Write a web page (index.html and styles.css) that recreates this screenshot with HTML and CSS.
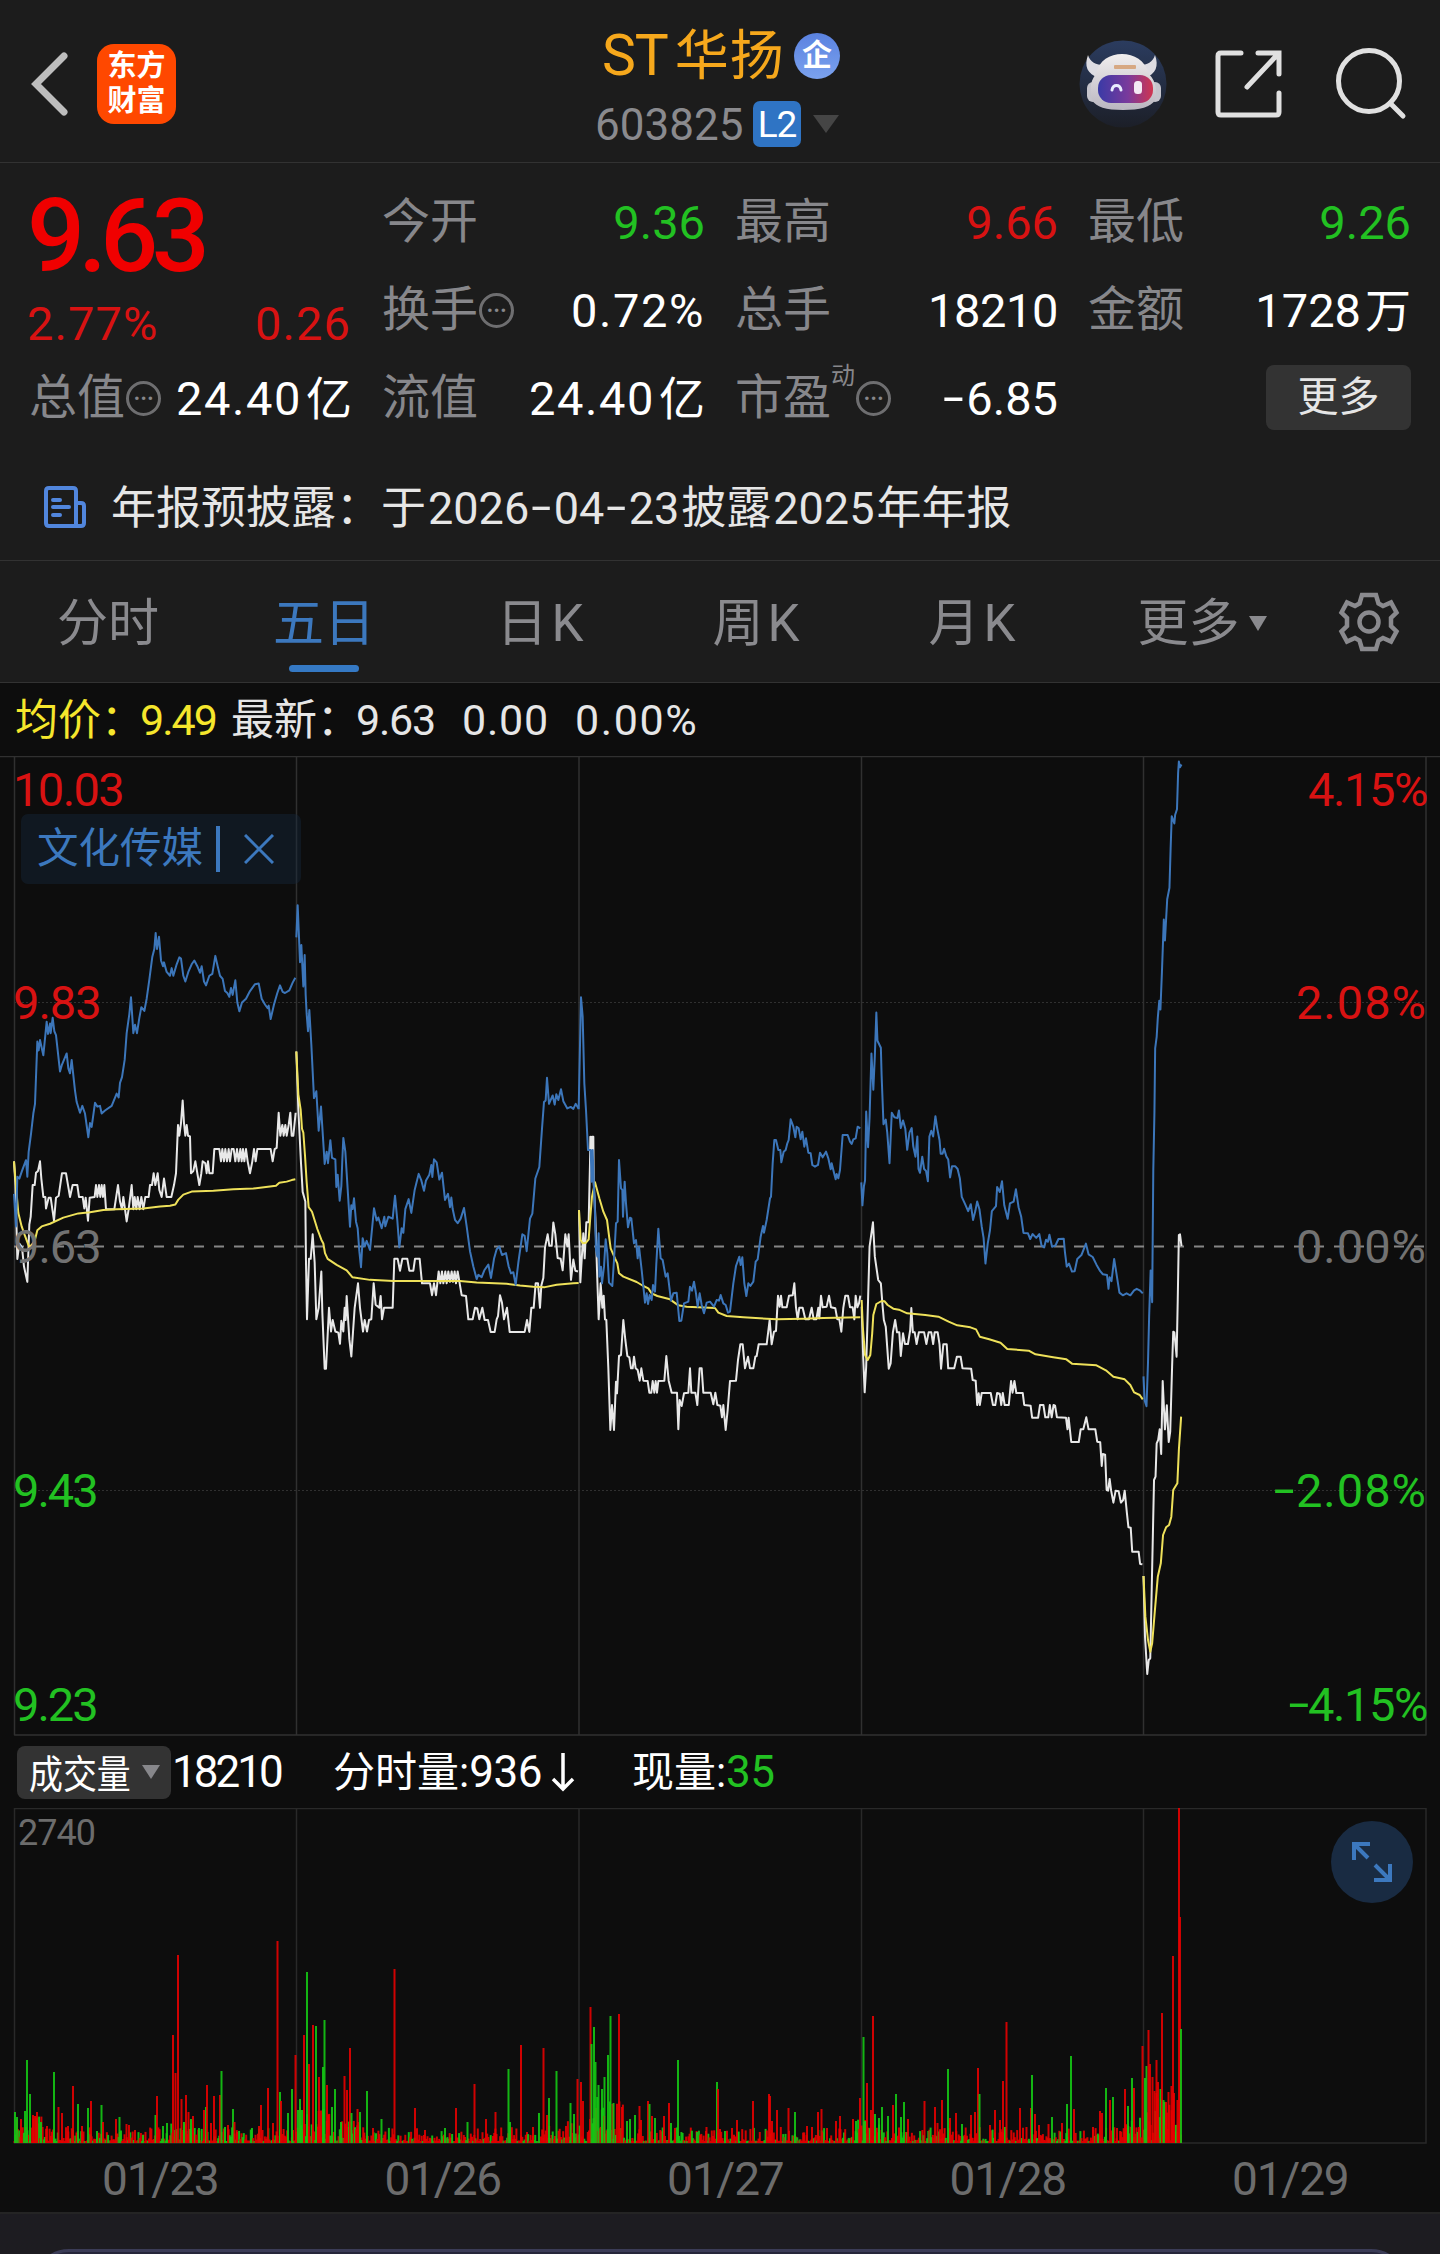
FILE: index.html
```html
<!DOCTYPE html>
<html lang="zh-CN">
<head>
    <meta charset="UTF-8">
    <meta name="viewport" content="width=device-width, initial-scale=1.0">
    <title>ST华扬 603825</title>
    <link rel="stylesheet" href="styles.css">
</head>
<body>
    <header class="header">
        <div class="header-left">
            <svg class="back-icon" viewBox="0 0 40 68"><path d="M34 6 6 34 34 62"/></svg>
            <div class="logo"><span>东方</span><span>财富</span></div>
        </div>
        <div class="title">
            <div class="name-row">
                <span class="name"><span class="st">ST</span>华扬</span>
                <span class="ent-badge">企</span>
            </div>
            <div class="code-row">
                <span class="code">603825</span>
                <span class="level">L2</span>
                <span class="caret"></span>
            </div>
        </div>
        <div class="header-right">
            <svg class="robot" viewBox="0 0 88 88">
                <defs>
                    <linearGradient id="halo" x1="0" y1="0" x2="0" y2="1">
                        <stop offset="0" stop-color="#2b3c5f"/>
                        <stop offset="1" stop-color="#1c1f28"/>
                    </linearGradient>
                    <linearGradient id="visor" x1="0" y1="0" x2="1" y2="0">
                        <stop offset="0" stop-color="#3a3aa6"/>
                        <stop offset=".55" stop-color="#7a3a9c"/>
                        <stop offset="1" stop-color="#d03550"/>
                    </linearGradient>
                    <linearGradient id="shell" x1="0" y1="0" x2="0" y2="1">
                        <stop offset="0" stop-color="#f1eeee"/>
                        <stop offset="1" stop-color="#b9b6c0"/>
                    </linearGradient>
                </defs>
                <circle cx="44" cy="44" r="43.5" fill="url(#halo)"/>
                <path d="M20 38C8 34 5 26 9 15c2 7 8 10 16 10zM66 38c11-4 14-12 10-23-2 7-8 10-15 10z" fill="#dddce2"/>
                <rect x="8" y="42" width="12" height="20" rx="6" fill="#c5c4cc"/>
                <rect x="70" y="42" width="12" height="20" rx="6" fill="#c5c4cc"/>
                <path d="M17 34C20 20 31 14 43 14s23 6 27 20c8 8 8 19 6 26-4 7-15 10-32 10s-27-3-31-10c-2-7-3-18 4-26z" fill="url(#shell)"/>
                <rect x="35" y="25" width="22" height="4" rx="1" fill="#d7a882"/>
                <rect x="19" y="35" width="55" height="28" rx="13" fill="url(#visor)"/>
                <path d="M33 50c1-6 8-6 9 0" fill="none" stroke="#e9ecff" stroke-width="3" stroke-linecap="round"/>
                <rect x="55" y="41" width="8" height="13" rx="3.5" fill="#f4e9f4"/>
            </svg>
            <svg class="share-icon" viewBox="0 0 72 72"><path d="M28 5H8Q5 5 5 8V64Q5 67 8 67H63Q66 67 66 64V45M45 5H66V26M65 6 34 39"/></svg>
            <svg class="search-icon" viewBox="0 0 76 76"><circle cx="36" cy="35" r="30.5"/><path d="M57 57 70 70"/></svg>
        </div>
    </header>

    <section class="quote">
        <div class="price-cell">
            <div class="price">9.63</div>
            <div class="change"><span>2.77%</span><span>0.26</span></div>
        </div>
        <div class="cell"><span class="label">今开</span><span class="value green">9.36</span></div>
        <div class="cell"><span class="label">最高</span><span class="value red">9.66</span></div>
        <div class="cell"><span class="label">最低</span><span class="value green">9.26</span></div>
        <div class="cell"><span class="label">换手<i class="dots">•••</i></span><span class="value wide">0.72%</span></div>
        <div class="cell"><span class="label">总手</span><span class="value narrow">18210</span></div>
        <div class="cell"><span class="label">金额</span><span class="value">1728<b>万</b></span></div>
        <div class="cell"><span class="label">总值<i class="dots">•••</i></span><span class="value wide">24.40<b>亿</b></span></div>
        <div class="cell"><span class="label">流值</span><span class="value wide">24.40<b>亿</b></span></div>
        <div class="cell"><span class="label">市盈<sup>动</sup><i class="dots">•••</i></span><span class="value"><i class="dash">-</i>6.85</span></div>
        <div class="cell end"><button class="more-button">更多</button></div>
    </section>

    <section class="notice">
        <svg class="notice-icon" viewBox="0 0 44 44"><path d="M33 41V6Q33 3 30 3H6Q3 3 3 6V38Q3 41 6 41H38Q41 41 41 38V21Q41 18 38 18H33M10 15H17M10 22H26M10 30H17"/></svg>
        <span>年报预披露：于<em>2026<i class="dash">-</i>04<i class="dash">-</i>23</em>披露<em>2025</em>年年报</span>
    </section>

    <nav class="tabs">
        <span class="tab">分时</span>
        <span class="tab active">五日</span>
        <span class="tab">日<em>K</em></span>
        <span class="tab">周<em>K</em></span>
        <span class="tab">月<em>K</em></span>
        <span class="tab tab-more">更多<i class="caret"></i></span>
        <svg class="gear" viewBox="-32 -32 64 64">
            <path d="M-7-27H7L9.5-18.5 14-16 22-19.5 27.5-9.5 22-4V4L27.5 9.5 22 19.5 14 16 9.5 18.5 7 27H-7L-9.5 18.5-14 16-22 19.5-27.5 9.5-22 4V-4L-27.5-9.5-22-19.5-14-16-9.5-18.5Z"/>
            <circle r="9.5"/>
        </svg>
    </nav>

    <div class="summary">
        <span class="avg">均价：<em>9.49</em></span>
        <span>最新：<em>9.63</em></span>
        <em class="diff">0.00</em>
        <em class="diff-pct">0.00%</em>
    </div>

    <div class="chart">
        <svg class="price-chart" viewBox="0 756 1440 980">
            <g class="grid">
                <path d="M0 756.5H1440M14.5 756V1735H1426V756"/>
                <path d="M296.5 757V1735M579 757V1735M861.5 757V1735M1143.5 757V1735"/>
                <path class="dotted" d="M14 1002.5H1426M14 1490.5H1426"/>
                <path class="zero" d="M14 1246.5H1426"/>
            </g>
            <!-- 01/23 -->
            <g transform="translate(0 750) scale(.33333 .38265)">
                <path class="now" d="M42,1075 46,1130 52,1330 58,1290 66,1300 72,1350 82,1390 88,1240 92,1220 98,1137 104,1137 108,1105 114,1100 120,1075 124,1120 130,1168 136,1168 138,1198 146,1170 152,1170 162,1230 168,1170 176,1165 186,1106 198,1106 204,1137 210,1168 218,1137 232,1137 237,1168 248,1168 253,1198 257,1170 264,1230 269,1170 284,1168 288,1137 292,1168 297,1137 301,1168 305,1137 309,1168 313,1137 318,1200 343,1200 354,1137 360,1180 366,1200 370,1168 375,1200 380,1232 386,1200 395,1137 400,1200 404,1168 409,1200 413,1168 419,1200 424,1168 430,1200 436,1168 446,1168 450,1137 456,1137 461,1106 466,1137 473,1106 478,1150 485,1168 492,1120 500,1168 514,1168 522,1137 528,1106 534,980 538,1008 543,975 548,916 552,975 556,1008 560,980 564,1008 570,1010 573,1106 580,1100 586,1075 592,1106 598,1137 604,1106 608,1075 616,1080 620,1106 624,1075 628,1106 638,1106 643,1043 658,1043 663,1075 667,1043 672,1075 676,1043 681,1075 686,1043 690,1075 695,1043 701,1043 706,1075 711,1043 716,1075 721,1043 725,1075 729,1043 733,1075 738,1043 743,1075 750,1106 757,1075 762,1043 767,1075 772,1043 812,1043 818,1075 824,1043 830,1040 836,948 841,1008 847,980 851,1008 856,980 860,1008 866,980 871,948 875,1008 880,1008 887,948"/>
                <path class="mean" d="M42,1075 47,1130 55,1210 65,1245 75,1270 88,1300 98,1290 105,1280 112,1255 125,1245 150,1238 190,1222 235,1211 270,1208 310,1202 350,1200 430,1198 480,1193 510,1191 526,1188 535,1175 550,1162 575,1154 640,1152 700,1148 760,1146 810,1141 828,1139 838,1131 860,1128 875,1124 886,1122"/>
                <path class="sector" d="M42,1160 48,1245 52,1115 58,1120 66,1100 78,1072 82,1115 86,1050 93,1003 100,950 105,925 112,762 116,785 120,758 130,798 140,710 144,742 150,715 152,740 158,700 163,735 168,745 180,840 186,822 200,793 205,832 210,845 215,810 225,890 230,920 240,948 247,930 255,950 265,1012 270,975 275,985 285,922 292,932 300,930 305,950 315,942 335,930 350,898 356,908 360,870 366,855 374,810 380,740 388,690 393,646 400,740 405,718 411,740 418,700 424,672 433,682 440,650 448,600 457,540 463,520 467,478 471,520 477,488 483,550 489,565 492,555 500,580 510,590 515,570 520,590 530,560 538,542 543,545 550,590 556,605 565,580 575,560 583,550 592,565 600,582 605,565 612,605 618,615 628,590 637,585 646,538 653,565 660,590 668,598 675,630 682,635 688,645 693,622 698,640 706,602 712,660 718,683 726,660 738,650 750,630 765,612 776,610 785,650 795,665 803,675 806,668 812,703 822,665 832,635 840,615 848,632 855,635 868,628 878,608 886,595"/>
            </g>
            <!-- 01/26 -->
            <g transform="translate(290 880) scale(.33333 .38265)">
                <path class="now" d="M19,448 25,600 33,740 38,815 46,840 48,1000 51,1148 57,990 62,990 68,926 74,1000 79,1148 86,1118 94,1023 97,1130 104,1277 108,1277 117,1118 123,1180 128,1150 136,1180 145,1183 150,1212 154,1152 160,1180 164,1118 167,1150 170,1087 178,1200 184,1245 194,1118 204,1054 210,1118 219,1180 224,1150 231,1180 237,1150 244,1148 251,1054 257,1110 268,1118 272,1087 276,1148 282,1118 308,1118 313,990 323,990 330,1021 337,990 352,990 358,1021 370,1021 375,990 389,990 396,1054 420,1054 426,1085 432,1054 438,1085 446,1023 451,1054 456,1023 460,1054 466,1023 470,1054 475,1023 480,1050 485,1023 489,1050 494,1023 498,1054 503,1023 512,1070 515,1085 528,1087 535,1148 548,1148 555,1118 562,1120 568,1148 577,1118 584,1150 594,1150 602,1181 614,1181 620,1148 624,1140 630,1085 636,1105 642,1148 651,1118 659,1181 704,1181 711,1150 718,1181 724,1118 731,1118 737,1054 744,1054 750,1118 754,1060 760,1040 765,960 773,926 778,956 785,956 790,895 796,926 803,988 812,990 818,1020 826,926 832,958 836,926 843,1045 850,992 856,1021 864,1023"/>
                <path class="mean" d="M19,448 25,560 32,600 36,650 40,660 45,720 50,790 56,855 66,867 76,895 82,912 94,940 100,950 105,975 113,990 140,1006 170,1020 187,1038 240,1045 310,1048 400,1048 510,1048 560,1052 650,1055 690,1060 730,1063 765,1064 800,1058 850,1054 866,1053"/>
                <path class="sector" d="M19,150 23,66 27,150 30,215 34,170 40,278 44,196 47,300 50,350 54,395 58,340 64,430 72,570 79,552 86,655 93,592 104,742 110,710 114,740 121,680 126,726 136,730 139,802 143,770 149,838 154,800 157,730 160,674 166,710 180,906 184,850 188,860 192,832 198,893 203,910 208,970 213,1012 218,936 224,958 230,943 240,967 252,858 260,890 265,882 275,910 283,880 286,905 295,880 308,885 315,825 322,890 328,960 335,910 340,922 346,860 356,834 364,870 374,810 386,768 394,785 402,812 408,785 418,770 424,745 427,776 432,730 440,738 448,783 456,765 465,836 474,820 480,855 484,830 488,860 495,888 503,897 512,885 522,857 530,905 540,970 550,1010 560,1043 565,1032 575,1038 583,1020 595,1005 603,1040 612,990 620,965 628,958 636,980 648,975 656,1010 663,1028 670,1025 677,1058 685,1000 697,926 704,930 710,970 720,885 727,872 736,780 748,750 756,650 762,580 767,576 771,517 777,585 788,563 794,587 799,560 805,575 813,547 820,578 832,597 842,593 850,598 857,585 866,598"/>
            </g>
            <!-- 01/27 -->
            <g transform="translate(570 950) scale(.33333)">
                <path class="now" d="M27,780 31,997 35,930 40,850 44,925 49,817 56,817 60,640 61,560 66,600 66,560 70,560 71,690 76,800 81,960 86,1108 92,1000 97,1073 101,1037 105,1108 109,1110 115,1255 121,1440 126,1365 132,1440 138,1295 141,1330 147,1218 153,1215 160,1110 166,1170 172,1218 178,1222 183,1255 188,1255 192,1220 197,1255 203,1260 209,1292 214,1255 220,1292 233,1293 238,1328 244,1328 248,1293 253,1328 257,1293 261,1328 265,1293 283,1292 289,1218 296,1292 305,1328 321,1328 325,1438 329,1350 335,1368 342,1330 355,1328 360,1255 364,1328 376,1328 382,1365 389,1255 395,1255 400,1328 422,1328 430,1363 436,1328 442,1365 451,1367 456,1402 460,1365 467,1440 473,1380 480,1293 498,1292 504,1230 511,1183 518,1183 525,1255 534,1220 540,1255 550,1255 556,1220 560,1218 566,1183 590,1183 599,1110 605,1183 612,1145 618,1143 624,1037 629,1070 633,1037 637,1072 650,1072 657,1037 668,1036 673,1000 678,1072 683,1108 688,1073 698,1073 706,1108 717,1108 725,1073 731,1108 739,1108 745,1073 748,1105 753,1037 758,1072 770,1070 777,1037 783,1072 796,1075 802,1108 808,1108 814,1145 820,1073 826,1037 834,1037 840,1072 848,1072 853,1108 857,1037 862,1072 867,1060 871,1037"/>
                <path class="mean" d="M27,780 32,870 38,880 48,878 56,868 61,800 66,740 75,697 88,745 100,785 111,810 118,865 122,895 135,925 142,940 147,970 160,980 200,996 220,1008 235,1015 245,1030 262,1038 300,1048 325,1066 350,1070 435,1074 445,1088 470,1098 520,1102 620,1108 700,1106 760,1104 871,1102"/>
                <path class="sector" d="M26,478 33,142 38,200 43,400 48,480 54,600 62,600 65,695 68,600 71,695 74,760 78,900 82,920 86,850 88,980 93,950 96,1000 102,950 107,868 112,910 117,998 127,1008 132,930 138,820 143,815 147,630 153,715 157,720 159,800 164,695 168,760 174,832 180,803 184,805 192,880 198,870 203,925 207,890 215,960 225,1058 230,1030 234,1062 239,1035 245,1050 249,1005 255,1025 259,940 265,836 272,925 278,930 287,980 293,970 303,1052 310,1030 320,1028 328,1113 334,1112 342,1060 355,1055 360,1010 366,1022 372,995 378,1030 383,1070 389,1030 395,1065 402,1090 410,1058 420,1055 432,1070 440,1050 447,1052 452,1035 460,1060 467,1065 474,1088 480,1085 490,1000 498,948 508,920 512,945 517,922 523,1000 529,1038 535,1000 541,1008 550,995 557,935 563,928 572,860 579,828 582,848 590,810 600,745 603,740 608,640 613,570 618,570 625,600 631,600 634,637 641,605 647,600 652,580 656,570 662,508 670,530 676,562 680,530 686,535 692,568 697,545 703,590 708,565 715,608 722,610 727,645 735,650 744,645 750,608 758,622 768,605 775,625 782,658 785,640 792,668 797,688 800,672 805,685 810,660 818,555 833,555 840,575 845,582 850,568 857,565 863,530 871,535"/>
            </g>
            <!-- 01/28 and 01/29 -->
            <g transform="translate(850 1300) scale(.37628 .33333)">
                <path class="now" d="M31,20 35,170 39,277 43,200 48,0 52,-160 61,-233 66,-130 75,-60 82,-50 86,10 90,60 95,80 103,206 108,190 114,97 120,60 125,97 131,97 135,168 141,100 146,132 154,132 160,90 163,24 167,97 172,97 177,132 183,97 197,97 203,132 209,97 216,97 221,132 225,97 233,97 238,133 242,206 248,133 257,133 261,205 277,205 284,170 294,170 299,205 322,206 326,240 334,242 338,315 342,280 345,315 350,279 374,279 380,315 386,315 391,279 398,281 402,315 406,279 411,315 422,315 428,243 432,278 437,243 442,279 459,279 463,315 480,317 484,353 500,353 505,315 514,315 519,352 527,352 531,315 536,352 541,315 545,317 550,352 574,353 578,388 581,353 588,426 608,426 613,388 620,388 628,352 634,388 652,388 657,425 665,427 669,498 672,462 678,464 682,570 686,572 690,537 694,572 700,608 706,572 714,574 720,608 726,600 730,572 736,640 740,682 746,683 750,755 767,755 771,792 777,793"/>
                <path class="mean" d="M31,0 34,80 40,165 47,180 54,165 59,100 62,45 70,12 84,3 92,4 100,15 115,26 130,29 152,40 200,45 235,50 262,65 285,76 320,82 335,88 345,110 370,118 400,128 418,147 475,152 493,163 540,172 575,178 590,191 655,196 680,211 700,230 730,238 745,255 755,277 770,285 778,298"/>
                <path class="now" d="M780,828 784,1010 790,1122 794,1080 798,1075 802,860 805,700 808,540 812,530 815,430 819,420 823,388 827,462 831,243 837,388 842,316 847,426 851,395 856,200 859,95 862,97 868,170 871,0 874,-195 877,-197 881,-162"/>
                <path class="mean" d="M780,828 785,950 792,1020 798,1055 803,1030 810,935 818,830 826,790 832,705 840,682 848,675 854,650 859,570 870,550 874,450 880,350"/>
            </g>
            <g transform="translate(850 750) scale(.37628 .38265)">
                <path class="sector" d="M30,1130 33,1190 37,1140 40,1125 43,945 48,1038 52,960 57,793 62,888 66,800 70,686 73,760 82,778 84,850 89,978 95,966 99,1000 105,1080 111,948 118,960 126,962 130,942 135,988 141,968 147,990 152,1045 158,1000 164,988 168,1035 174,1063 179,1010 182,1095 186,1105 192,1063 197,1095 202,1100 207,1127 211,1010 216,995 221,1010 227,957 232,990 238,1020 241,1055 246,1055 250,1042 256,1062 261,1070 266,1117 271,1088 280,1088 286,1095 292,1120 297,1168 305,1185 314,1205 321,1187 327,1228 333,1205 338,1180 344,1200 350,1245 355,1275 360,1342 366,1290 372,1255 377,1205 388,1192 391,1142 398,1155 404,1127 410,1190 419,1225 425,1185 435,1180 441,1148 448,1195 455,1220 461,1262 473,1263 479,1278 485,1265 495,1275 503,1265 509,1295 516,1300 521,1280 526,1285 530,1267 537,1298 546,1295 554,1278 568,1277 571,1310 576,1350 582,1342 590,1363 597,1362 604,1330 615,1320 627,1290 634,1318 645,1325 655,1345 665,1362 672,1370 683,1372 687,1408 690,1378 695,1388 702,1330 710,1380 716,1418 725,1425 735,1420 745,1425 755,1412 762,1408 770,1412 778,1420"/>
                <path class="sector" d="M780,1637 783,1700 788,1715 792,1600 795,1480 799,1360 803,1443 806,1100 809,950 811,780 815,750 818,700 822,655 825,678 829,580 834,443 837,498 843,390 849,360 852,260 855,173 862,192 864,170 869,155 872,60 874,30 877,45 881,38"/>
            </g>
        </svg>
        <div class="axis axis-left">
            <span class="red">10.03</span>
            <span class="red">9.83</span>
            <span class="gray">9.63</span>
            <span class="green">9.43</span>
            <span class="green">9.23</span>
        </div>
        <div class="axis axis-right">
            <span class="red narrow">4.15%</span>
            <span class="red">2.08%</span>
            <span class="gray">0.00%</span>
            <span class="green"><i class="dash">-</i>2.08%</span>
            <span class="green narrow"><i class="dash">-</i>4.15%</span>
        </div>
        <div class="sector-tag">
            <span>文化传媒</span>
            <i class="bar"></i>
            <svg viewBox="0 0 30 30"><path d="M1 1 29 29M29 1 1 29"/></svg>
        </div>
    </div>

    <div class="volume-info">
        <button class="indicator"><span>成交量</span><i class="caret"></i></button>
        <em class="total">18210</em>
        <span class="minute">分时量:<em>936</em></span>
        <svg class="down-arrow" viewBox="0 0 24 40"><path d="M12 1V37M2 27 12 37 22 27"/></svg>
        <span class="current">现量:<em class="green">35</em></span>
    </div>

    <div class="volume">
        <svg class="volume-chart" viewBox="0 1808 1440 336">
            <path class="frame" d="M14.5 2143V1808.5H1426V2143ZM296.5 1809V2143M579 1809V2143M861.5 1809V2143M1143.5 1809V2143"/>
            <g id="bars"></g>
        </svg>
        <em class="volume-max">2740</em>
        <button class="expand">
            <svg viewBox="0 0 82 82"><path d="M39 23H23V39M23 23 37 37M43 59H59V43M59 59 44 44"/></svg>
        </button>
    </div>

    <div class="dates">
        <span>01/23</span><span>01/26</span><span>01/27</span><span>01/28</span><span>01/29</span>
    </div>

    <footer class="footer"><div class="footer-card"></div></footer>
    <script src="chart.js"></script>
</body>
</html>
```
FILE: styles.css
```css
* {
    box-sizing: border-box;
}
body {
    margin: 0;
    width: 1440px;
    height: 2254px;
    overflow: hidden;
    background: #0d0d0d;
    color: #e6e6e6;
    font-family: Roboto, "Noto Sans CJK SC", sans-serif;
    font-size: 47px;
    line-height: 1;
}
em, i, b {
    font-style: normal;
    font-weight: 400;
}
button {
    border: none;
    padding: 0;
    font-family: inherit;
    color: inherit;
}
svg {
    display: block;
    fill: none;
}
.red { color: #d81212; }
.green { color: #22c122; }
.gray { color: #727272; }

/* Minus sign and date separator, a bit longer than the font's own */
.dash {
    display: inline-block;
    transform: translateY(-2px) scaleX(1.6);
    margin: 0 6px;
}

/* Header */
.header {
    height: 163px;
    display: grid;
    grid-template-columns: 1fr auto 1fr;
    background: #1c1c1c;
    border-bottom: 1px solid #323232;
}
.header-left {
    display: flex;
    align-items: center;
    padding: 5px 0 0 30px;
    gap: 27px;
}
.back-icon {
    width: 40px;
    height: 68px;
    stroke: #bdbdbd;
    stroke-width: 7;
    stroke-linecap: round;
}
.logo {
    width: 79px;
    height: 80px;
    border-radius: 17px;
    background: #ff4800;
    color: #fff;
    font-size: 29px;
    font-weight: 700;
    line-height: 35px;
    padding-top: 5px;
    text-align: center;
}
.logo span {
    display: block;
}
.title {
    width: 250px;
    padding-top: 24px;
}
.name-row {
    display: flex;
    align-items: center;
    height: 63px;
    padding-left: 7px;
}
.name {
    color: #f6a81c;
    font-size: 54px;
    letter-spacing: 1px;
    width: 192px;
    white-space: nowrap;
}
.st {
    font-size: 57px;
    letter-spacing: -1px;
    margin-right: 7px;
}
.ent-badge {
    width: 46px;
    height: 46px;
    border-radius: 50%;
    background: linear-gradient(#5a82e0, #7ba2ee);
    color: #fff;
    font-size: 30px;
    font-weight: 700;
    line-height: 44px;
    text-align: center;
}
.code-row {
    display: flex;
    align-items: center;
    height: 46px;
    margin-top: 14px;
}
.code {
    width: 158px;
    padding-top: 2px;
    font-size: 44px;
    color: #8a8a8e;
}
.level {
    width: 48px;
    height: 46px;
    border-radius: 7px;
    background: #2f74c4;
    color: #fff;
    font-size: 37px;
    line-height: 47px;
    text-align: center;
    letter-spacing: -1px;
}
.caret {
    display: inline-block;
    border: 13px solid transparent;
    border-top: 18px solid #454545;
    border-bottom: 0;
}
.code-row .caret {
    margin-left: 12px;
}
.header-right {
    display: flex;
    align-items: center;
    justify-content: flex-end;
    padding: 5px 31px 0 0;
}
.robot {
    width: 88px;
    height: 88px;
}
.share-icon {
    width: 72px;
    height: 72px;
    margin: 0 48px 0 46px;
    stroke: #e0e0e0;
    stroke-width: 5;
    stroke-linecap: round;
}
.search-icon {
    width: 76px;
    height: 76px;
    stroke: #e0e0e0;
    stroke-width: 5;
    stroke-linecap: round;
}

/* Quote table */
.quote {
    height: 278px;
    background: #1c1c1c;
    padding: 14px 29px 0 29px;
    display: grid;
    grid-template-columns: repeat(4, 322px);
    grid-auto-rows: 88px;
    column-gap: 31px;
}
.price-cell {
    grid-row: span 2;
    color: #d81212;
}
.price {
    margin-top: 8px;
    height: 103px;
    font-size: 102px;
    font-weight: 500;
    line-height: 103px;
    letter-spacing: -6.5px;
    margin-left: -2px;
    color: #f00000;
}
.change {
    display: flex;
    justify-content: space-between;
    margin-top: 12px;
    margin-left: -2px;
    letter-spacing: 1.1px;
}
.cell {
    display: flex;
    align-items: center;
    justify-content: space-between;
    white-space: nowrap;
    padding-top: 2px;
}
.cell.end {
    justify-content: flex-end;
    padding-top: 0;
}
.label {
    display: flex;
    align-items: center;
    color: #87878b;
    font-size: 48px;
}
.label sup {
    font-size: 24px;
    align-self: flex-start;
    margin-top: -10px;
}
.value {
    color: #fff;
    margin-right: -1px;
}
.value.red { color: #d81212; }
.value.green { color: #22c122; }
.value.wide { letter-spacing: 1.6px; }
.value.narrow { letter-spacing: -.4px; }
.value b {
    margin-left: 4px;
    font-size: 46px;
    letter-spacing: 0;
}
.value .dash {
    margin-left: 4px;
}
.dots {
    width: 35px;
    height: 35px;
    margin-left: 1px;
    border: 3px solid #6e6e70;
    border-radius: 50%;
    font-size: 17px;
    line-height: 29px;
    text-align: center;
    letter-spacing: 1px;
    text-indent: 1px;
    color: #87878b;
}
.dots {
    display: flex;
    justify-content: center;
}
.more-button {
    width: 145px;
    height: 65px;
    border-radius: 8px;
    background: #333;
    font-size: 41px;
    line-height: 62px;
    margin-right: -1px;
}

/* Notice */
.notice {
    height: 120px;
    display: flex;
    align-items: center;
    padding: 12px 0 0 43px;
    gap: 24px;
    background: #1c1c1c;
    border-bottom: 1px solid #323232;
    font-size: 45px;
}
.notice span {
    padding-top: 3px;
}
.notice em {
    margin: 0 2px;
}
.notice-icon {
    width: 44px;
    height: 44px;
    stroke: #5186dd;
    stroke-width: 4;
    stroke-linecap: round;
}

/* Period tabs */
.tabs {
    height: 122px;
    display: flex;
    align-items: center;
    background: #1c1c1c;
    border-bottom: 1px solid #323232;
    color: #8a8a8e;
    font-size: 51px;
}
.tab {
    position: relative;
    width: 216px;
    padding-top: 3px;
    text-align: center;
    white-space: nowrap;
}
.tab em {
    margin-left: 4px;
}
.tab.active {
    color: #3c78be;
}
.tab.active::after {
    content: "";
    position: absolute;
    left: 73px;
    top: 70px;
    width: 70px;
    height: 7px;
    border-radius: 4px;
    background: #3579c4;
}
.tab-more {
    width: 244px;
}
.tab-more .caret {
    border-width: 15px 9px 0;
    border-top-color: #8a8a8e;
    margin: 0 0 10px 9px;
}
.gear {
    width: 64px;
    height: 64px;
    margin-left: 13px;
    stroke: #8a8a8e;
    stroke-width: 4.5;
}

.summary {
    height: 73px;
    display: flex;
    align-items: center;
    padding: 2px 0 0 15px;
    font-size: 43px;
}
.summary span {
    width: 216px;
}
.summary span + span {
    width: 231px;
}
.summary span em {
    margin-left: -4px;
    letter-spacing: -1.2px;
}
.summary .avg em {
    letter-spacing: -2px;
}
.diff {
    letter-spacing: .8px;
}
.diff-pct {
    margin-left: 26px;
    letter-spacing: 1.6px;
}
.avg {
    color: #f5e62c;
}

/* Price chart */
.chart {
    position: relative;
    height: 980px;
}
.price-chart {
    width: 1440px;
    height: 980px;
}
.price-chart path {
    vector-effect: non-scaling-stroke;
    stroke-linejoin: round;
}
.grid path {
    stroke: #303030;
    stroke-width: 1.5;
}
.grid .dotted {
    stroke-width: 1;
    stroke-dasharray: 2 2;
}
.grid .zero {
    stroke: #858585;
    stroke-width: 2;
    stroke-dasharray: 10 10;
}
.now, .mean, .sector {
    stroke: #e8e8e8;
    stroke-width: 2;
}
.mean {
    stroke: #eee15a;
}
.sector {
    stroke: #3c76ba;
}
.axis {
    position: absolute;
    top: 6px;
    height: 970px;
    display: grid;
    grid-template-rows: 183px 244px 244px 244px 55px;
}
.axis span {
    line-height: 55px;
}
.axis span:nth-child(1) {
    margin-bottom: 31px;
}
.axis span:nth-child(2), .axis span:nth-child(3), .axis span:nth-child(4) {
    margin-top: 30px;
}
.axis-left {
    left: 13px;
    letter-spacing: -1px;
}
.axis-left .red:first-child {
    letter-spacing: -1.6px;
}
.axis-left .green {
    letter-spacing: -2px;
}
.axis-right {
    right: 13px;
    text-align: right;
    letter-spacing: 1px;
}
.axis-right .narrow {
    letter-spacing: -1.4px;
}
.axis .dash {
    margin: 0 4px 0 0;
}
.sector-tag {
    position: absolute;
    left: 21px;
    top: 58px;
    width: 280px;
    height: 70px;
    display: flex;
    align-items: center;
    padding-left: 16px;
    border-radius: 7px;
    background: rgba(22, 40, 62, .42);
    color: #3c78be;
    font-size: 41.5px;
}
.sector-tag .bar {
    width: 4px;
    height: 46px;
    margin: 0 24px 0 13px;
    background: #3c78be;
}
.sector-tag svg {
    width: 30px;
    height: 30px;
    stroke: #3c78be;
    stroke-width: 3;
}

/* Volume */
.volume-info {
    height: 72px;
    display: flex;
    align-items: center;
    padding-left: 17px;
    color: #fff;
    font-size: 42px;
    white-space: nowrap;
}
.volume-info em {
    font-size: 44px;
    letter-spacing: -.5px;
}
.indicator {
    width: 154px;
    height: 53px;
    display: flex;
    align-items: center;
    padding-left: 12px;
    border-radius: 8px;
    background: #333;
    font-size: 39px;
}
.indicator span {
    width: 114px;
    transform: scaleX(.87);
    transform-origin: left;
    padding-bottom: 3px;
}
.indicator .caret {
    border-width: 14px 9px 0;
    border-top-color: #87878b;
    margin-left: -1px;
}
.volume-info .total {
    width: 161px;
    margin-left: 1px;
    letter-spacing: -3px;
}
.down-arrow {
    width: 24px;
    height: 40px;
    margin-left: 9px;
    stroke: #fff;
    stroke-width: 3.5;
}
.current {
    margin-left: 57px;
}
.volume {
    position: relative;
    height: 336px;
}
.volume-chart {
    width: 1440px;
    height: 336px;
}
.frame {
    stroke: #292929;
    stroke-width: 1.5;
}
.volume-max {
    position: absolute;
    left: 18px;
    top: 7px;
    font-size: 36px;
    line-height: 36px;
    letter-spacing: -1px;
    color: #6c6c6c;
}
.expand {
    position: absolute;
    left: 1331px;
    top: 13px;
    width: 82px;
    height: 82px;
    border-radius: 50%;
    background: #192b42;
}
.expand svg {
    stroke: #3c78be;
    stroke-width: 4;
}
.dates {
    height: 70px;
    display: grid;
    grid-template-columns: repeat(5, 282.5px);
    align-items: center;
    padding: 2px 0 0 19px;
    color: #6c6c6c;
    font-size: 46px;
    letter-spacing: -1.2px;
    text-align: center;
    border-bottom: 2px solid #242424;
}

.footer {
    height: 40px;
    padding: 35px 33px 0;
    background: #1d1c21;
}
.footer-card {
    height: 90px;
    border: 3px solid #3b3c57;
    border-radius: 36px;
    background: #26263a;
}
```
FILE: chart.js
```js
// [x, height, up] for the tall volume bars
const spikes = [
  [15,31,0],[17,26,0],[21,24,1],[25,32,0],[27,83,0],[30,49,0],[33,28,1],[35,27,1],[37,31,1],[41,21,0],[47,17,1],[54,71,0],[58.5,36,1],[62,30,1],[68,17,1],[73,57,1],[78,39,0],[82,17,1],[88,35,0],[91,42,1],[97,12,0],[101.5,38,0],[103,21,1],[116,24,1],[119.5,26,0],[126.5,19,1],[129,18,1],[143,8,0],[155.5,28,0],[157,47,1],[163,17,0],[167,20,0],[173,108,1],[175.5,70,1],[178,188,1],[181.5,44,1],[184,21,0],[186,48,1],[188.5,31,1],[191,24,0],[193,27,1],[199,15,0],[204,33,1],[206,36,0],[207,58,1],[211,20,1],[214,47,1],[220,48,1],[221.5,72,0],[225,16,0],[228,18,1],[233,34,0],[234.5,21,1],[237,11,1],[259,17,1],[261,38,1],[268,55,1],[273,20,1],[277.5,202,1],[280,51,0],[281,42,1],[288,30,0],[292,54,0],[295.5,88,1],
  [298,33,0],[300,44,0],[302,33,0],[304,108,1],[307,171,0],[309,79,1],[313,118,1],[316,117,0],[319,66,1],[323,76,0],[324.5,123,0],[327,58,1],[332,36,0],[335,54,0],[341,21,0],[344.5,67,1],[347,53,1],[350,95,1],[351.5,30,0],[357.5,34,1],[360,31,0],[367,52,0],[373,15,1],[381.5,24,0],[394.5,174,1],[415,35,1],[425,13,1],[445,15,0],[456,35,1],[467.5,21,0],[474.5,59,1],[486,24,1],[495.5,31,1],[508.5,74,0],[510,21,0],[521,98,1],[533,16,1],[539,30,0],[543.5,95,1],[547,28,1],[549,45,0],[556.5,72,0],[566,17,1],[570.5,40,0],[574,29,0],[577.5,64,1],
  [581,61,1],[583,42,1],[590.5,136,1],[591.5,99,0],[594,116,0],[595.5,81,0],[598.5,58,0],[602,54,0],[604.5,66,0],[608,88,0],[610.5,127,0],[613.5,40,0],[619,129,1],[622,36,1],[627,22,0],[630,24,0],[635,28,0],[639.5,37,1],[641,23,1],[648,42,1],[649.5,39,0],[652,27,1],[655,25,0],[664,27,1],[669,40,1],[671,20,0],[675,15,1],[678,83,0],[697,11,0],[706.5,16,1],[717,61,0],[718,54,1],[720,14,1],[725,12,0],[732,15,1],[737,23,1],[753,42,1],[769,49,1],[770,47,1],[772,22,1],[777,33,1],[788.5,35,1],[795,31,0],[807,17,1],[812,16,1],[818,31,1],[821.5,34,1],[827,15,1],[836,22,1],[840,27,1],[853,24,1],[856,22,0],[860,45,1],
  [863.5,106,0],[865,22,0],[867,60,1],[871,33,1],[873,127,1],[875,29,0],[879,25,0],[882,36,0],[888,27,0],[893,38,1],[896,49,0],[901,26,0],[904,41,0],[908,24,1],[924.5,42,1],[935,36,1],[937.5,20,1],[942,43,1],[948,74,0],[950,25,1],[956,30,1],[962,19,0],[971,28,1],[975,31,1],[978,75,1],[979.5,49,0],[990,18,1],[995,33,1],[1000,23,1],[1003,62,1],[1005,16,0],[1006.5,121,1],[1020,35,1],[1031,35,1],[1032,68,0],[1035,29,1],[1039,18,1],[1048.5,19,1],[1052,26,0],[1062,20,1],[1067,39,0],[1071,87,0],[1074,34,1],[1093,16,1],[1100,32,1],[1102,30,1],[1106,55,0],[1110,43,1],[1113,46,0],[1117,15,1],[1125,54,1],[1128,37,0],[1132,65,0],[1134,55,1],[1139,16,1],[1142.5,97,1],
  [1145,65,0],[1146.5,77,0],[1148.5,113,1],[1150,79,1],[1152.5,66,1],[1154.5,52,1],[1156.5,83,1],[1158,61,1],[1160.5,54,0],[1162,130,1],[1163.5,43,0],[1166,41,1],[1168.5,51,1],[1171.5,57,1],[1173,187,1],[1174,50,1],[1176,18,0],[1177.5,43,1],[1179,335,1],[1180,226,1],[1181,114,0]
];

// busy stretches: [from, to, max height]
const busy = [[14, 42, 26], [170, 200, 20], [296, 330, 36], [340, 362, 22], [540, 580, 20], [588, 624, 44], [858, 880, 22], [1125, 1143, 24], [1144, 1178, 50]];

const base = 2143;
let seed = 11;
function rand() {
  seed = (seed * 16807) % 2147483647;
  return seed / 2147483647;
}

function bar(x, h, up) {
  return `<path d="M${x.toFixed(1)} ${base}v${-h.toFixed(1)}" stroke="${up ? "#e60000" : "#14c814"}"/>`;
}

let out = "";
for (let x = 14.5; x < 1181; x += 1.17) {
  const zone = busy.find(b => x >= b[0] && x <= b[1]);
  const max = zone ? zone[2] : 14;
  out += bar(x, 2 + max * Math.pow(rand(), zone ? 1.2 : 2.6), rand() > .3);
}
spikes.forEach(s => { out += bar(s[0], s[1], s[2]); });

const bars = document.getElementById("bars");
bars.setAttribute("stroke-width", "2");
bars.setAttribute("stroke-opacity", ".9");
bars.innerHTML = out;
```
